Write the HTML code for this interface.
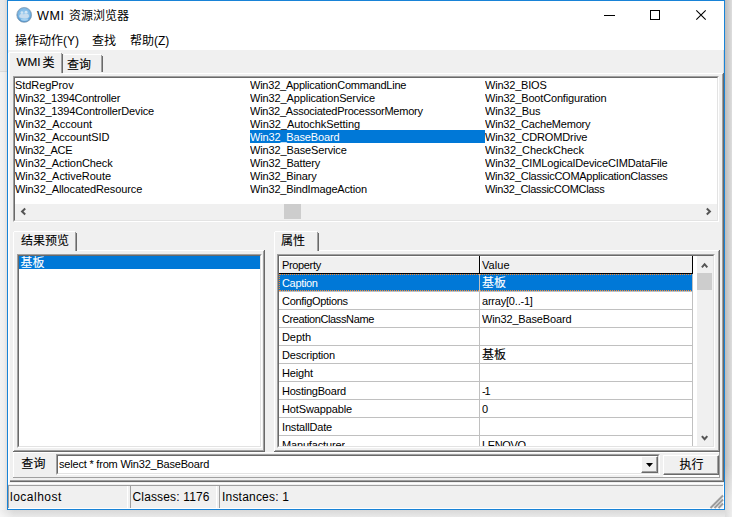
<!DOCTYPE html>
<html><head><meta charset="utf-8"><title>WMI 资源浏览器</title>
<style>
html,body{margin:0;padding:0}
body{width:732px;height:517px;overflow:hidden;position:relative;background:#e9e9e9;font-family:"Liberation Sans","Noto Sans CJK SC",sans-serif;color:#000}
div,span{position:absolute;box-sizing:border-box;white-space:nowrap}
svg{position:absolute;overflow:visible}
.shL{left:0;top:0;width:7px;height:517px;background:linear-gradient(180deg,rgba(0,0,0,0.035) 0,rgba(0,0,0,0.035) 71px,rgba(0,0,0,0.09) 71px,rgba(0,0,0,0.09) 72px,rgba(0,0,0,0) 72px),linear-gradient(90deg,#f3f3f3 0,#eeeeee 60%,#e2dfdc 100%)}
.shR{left:725px;top:0;width:7px;height:517px;background:linear-gradient(180deg,rgba(255,255,255,0) 0,rgba(255,255,255,0) 465px,rgba(255,255,255,0.45) 500px,rgba(255,255,255,0.5) 517px),linear-gradient(90deg,#bcbcbc,#dddddd)}
.shB{left:0;top:510px;width:725px;height:7px;background:linear-gradient(90deg,rgba(255,255,255,0.6) 0,rgba(255,255,255,0) 14px),linear-gradient(180deg,#d8d8d8,#e9e9e9)}
.win{left:7px;top:0;width:718px;height:510px;border:1px solid #1883d7;background:#fff}
.client{left:8px;top:50px;width:716px;height:459px;background:#f0f0f0}
.title{left:37px;top:7px;font-size:12px;line-height:18px}
.menu{top:33px;font-size:12px;line-height:17px}
.li{font-size:11.5px;line-height:12px;height:12px;transform:scaleX(0.956);transform-origin:0 0}
.sel{background:#0078d7;color:#fff}
.hl{background:#fff}.sh{background:#a0a0a0}.dk{background:#696969}.lt{background:#e3e3e3}.bk{background:#000}
.sunk{border:1px solid;border-color:#a0a0a0 #fff #fff #a0a0a0;background:#fff}
.sunk>i{position:absolute;left:0;top:0;right:0;bottom:0;border:1px solid;border-color:#696969 #e3e3e3 #e3e3e3 #696969}
.tab{font-size:12px;line-height:16px;-webkit-text-stroke:0.1px}
.st{font-size:12px;line-height:16px;top:489px}
.gl{background:#c0c0c0}
.pr{font-size:11.5px;line-height:12px;transform:scaleX(0.956);transform-origin:0 0}
</style></head><body>
<div class="shL"></div><div class="shR"></div><div class="shB"></div>
<div class="win"></div>
<!-- title bar -->
<svg style="left:16px;top:6px" width="17" height="17" viewBox="0 0 17 17">
<defs><radialGradient id="g1" cx="0.5" cy="0.45" r="0.55"><stop offset="0" stop-color="#a4d0f0"/><stop offset="0.7" stop-color="#7db8e5"/><stop offset="0.9" stop-color="#4f96d2"/><stop offset="1" stop-color="#4288c6"/></radialGradient></defs>
<circle cx="8.2" cy="8.9" r="7.4" fill="url(#g1)" stroke="#8a9fb3" stroke-width="0.8"/>
<circle cx="5.9" cy="6.6" r="1.3" fill="#cfe4f3"/><circle cx="10.1" cy="6.2" r="1.4" fill="#d3e6f4"/>
<path d="M3.2 10.6C3.2 8.4 4.6 7.9 6 7.9C7 7.9 7.6 8.2 8 8.6C8.5 7.9 9.2 7.6 10.2 7.6C12 7.6 13 8.6 13 10.4C13 11.6 11 12.3 8 12.3C5 12.3 3.2 11.8 3.2 10.6Z" fill="#c6dcee"/>
<ellipse cx="8.6" cy="13.6" rx="3.8" ry="1.3" fill="#b5dbf5" opacity="0.7"/>
</svg>
<div class="title"><span style="position:static;font-size:12.6px;letter-spacing:0.6px;margin-right:0.9px">WMI</span> 资源浏览器</div>
<svg style="left:604px;top:15px" width="11" height="1"><rect width="11" height="1" fill="#000"/></svg>
<svg style="left:650px;top:10px" width="10" height="10"><rect x="0.5" y="0.5" width="9" height="9" fill="none" stroke="#000" stroke-width="1"/></svg>
<svg style="left:696px;top:10px" width="10" height="10"><path d="M0.3 0.3L9.7 9.7M9.7 0.3L0.3 9.7" stroke="#000" stroke-width="1.1" fill="none"/></svg>
<!-- menu -->
<div class="menu" style="left:15px">操作动作(Y)</div>
<div class="menu" style="left:92px">查找</div>
<div class="menu" style="left:130px">帮助(Z)</div>
<div class="client"></div>
<!-- main tab control -->
<div class="hl" style="left:8px;top:73px;width:714px;height:1px"></div>
<div class="sh" style="left:722px;top:74px;width:1px;height:407px"></div>
<div class="dk" style="left:723px;top:73px;width:1px;height:409px"></div>
<div class="sh" style="left:10px;top:480px;width:713px;height:1px"></div>
<div class="dk" style="left:9px;top:481px;width:715px;height:1px"></div>
<!-- active tab -->
<div style="left:8px;top:52px;width:55px;height:22px;background:#f0f0f0"></div>
<div class="hl" style="left:8px;top:53px;width:1px;height:430px"></div>
<div style="left:9px;top:53px;width:1px;height:429px;background:#f9f9f9"></div>
<div class="hl" style="left:9px;top:52px;width:52px;height:1px"></div>
<div class="sh" style="left:61px;top:53px;width:1px;height:20px"></div>
<div class="dk" style="left:62px;top:54px;width:1px;height:19px"></div>
<div class="tab" style="left:16.5px;top:54px;font-size:11.7px;word-spacing:-1.2px">WMI <span style="position:relative;top:1px;font-size:12px">类</span></div>
<!-- inactive tab -->
<div class="hl" style="left:64px;top:54px;width:37px;height:1px"></div>
<div class="sh" style="left:101px;top:55px;width:1px;height:17px"></div>
<div class="dk" style="left:102px;top:56px;width:1px;height:16px"></div>
<div class="tab" style="left:67px;top:57px">查询</div>
<div style="left:723px;top:50px;width:1px;height:23px;background:#d9d9d9"></div>
<!-- class listbox -->
<div class="sunk" style="left:13px;top:76px;width:706px;height:146px"><i></i></div>

<div class="li" style="left:15px;top:79px;letter-spacing:-0.072px">StdRegProv</div>
<div class="li" style="left:15px;top:92px;letter-spacing:-0.225px">Win32_1394Controller</div>
<div class="li" style="left:15px;top:105px;letter-spacing:-0.161px">Win32_1394ControllerDevice</div>
<div class="li" style="left:15px;top:118px;letter-spacing:0.008px">Win32_Account</div>
<div class="li" style="left:15px;top:131px;letter-spacing:-0.067px">Win32_AccountSID</div>
<div class="li" style="left:15px;top:144px;letter-spacing:-0.312px">Win32_ACE</div>
<div class="li" style="left:15px;top:157px;letter-spacing:-0.08px">Win32_ActionCheck</div>
<div class="li" style="left:15px;top:170px;letter-spacing:-0.034px">Win32_ActiveRoute</div>
<div class="li" style="left:15px;top:183px;letter-spacing:-0.108px">Win32_AllocatedResource</div>
<div class="li" style="left:250px;top:79px;letter-spacing:-0.238px">Win32_ApplicationCommandLine</div>
<div class="li" style="left:250px;top:92px;letter-spacing:-0.119px">Win32_ApplicationService</div>
<div class="li" style="left:250px;top:105px;letter-spacing:-0.255px">Win32_AssociatedProcessorMemory</div>
<div class="li" style="left:250px;top:118px;letter-spacing:-0.065px">Win32_AutochkSetting</div>
<div class="sel" style="left:250px;top:130px;width:235px;height:13px"></div>
<div class="li" style="left:250px;top:131px;letter-spacing:-0.159px;color:#fff">Win32_BaseBoard</div>
<div class="li" style="left:250px;top:144px;letter-spacing:-0.142px">Win32_BaseService</div>
<div class="li" style="left:250px;top:157px;letter-spacing:-0.154px">Win32_Battery</div>
<div class="li" style="left:250px;top:170px;letter-spacing:-0.169px">Win32_Binary</div>
<div class="li" style="left:250px;top:183px;letter-spacing:-0.174px">Win32_BindImageAction</div>
<div class="li" style="left:485px;top:79px;letter-spacing:-0.205px">Win32_BIOS</div>
<div class="li" style="left:485px;top:92px;letter-spacing:-0.177px">Win32_BootConfiguration</div>
<div class="li" style="left:485px;top:105px;letter-spacing:-0.107px">Win32_Bus</div>
<div class="li" style="left:485px;top:118px;letter-spacing:-0.213px">Win32_CacheMemory</div>
<div class="li" style="left:485px;top:131px;letter-spacing:-0.142px">Win32_CDROMDrive</div>
<div class="li" style="left:485px;top:144px;letter-spacing:-0.039px">Win32_CheckCheck</div>
<div class="li" style="left:485px;top:157px;letter-spacing:-0.139px">Win32_CIMLogicalDeviceCIMDataFile</div>
<div class="li" style="left:485px;top:170px;letter-spacing:-0.266px">Win32_ClassicCOMApplicationClasses</div>
<div class="li" style="left:485px;top:183px;letter-spacing:-0.316px">Win32_ClassicCOMClass</div>
<!-- hscroll -->
<div style="left:15px;top:204px;width:702px;height:16px;background:#f0f0f0"></div>
<div style="left:284px;top:204px;width:17px;height:15px;background:#cdcdcd"></div>
<svg style="left:20px;top:207px" width="8" height="9"><path d="M5.2 1.6L2.1 4.5L5.2 7.4" stroke="#555" stroke-width="2" fill="none"/></svg>
<svg style="left:705px;top:207px" width="8" height="9"><path d="M1.8 1.6L4.9 4.5L1.8 7.4" stroke="#555" stroke-width="2" fill="none"/></svg>
<!-- left panel: tab + page -->
<div class="hl" style="left:13px;top:250px;width:250px;height:1px"></div>
<div class="hl" style="left:13px;top:250px;width:1px;height:201px"></div>
<div class="sh" style="left:263px;top:251px;width:1px;height:200px"></div>
<div class="dk" style="left:264px;top:250px;width:1px;height:202px"></div>
<div class="sh" style="left:14px;top:450px;width:250px;height:1px"></div>
<div class="dk" style="left:13px;top:451px;width:252px;height:1px"></div>
<div style="left:13px;top:231px;width:64px;height:21px;background:#f0f0f0"></div>
<div class="hl" style="left:13px;top:232px;width:1px;height:20px"></div>
<div class="hl" style="left:14px;top:231px;width:61px;height:1px"></div>
<div class="sh" style="left:75px;top:232px;width:1px;height:19px"></div>
<div class="dk" style="left:76px;top:233px;width:1px;height:18px"></div>
<div class="tab" style="left:21px;top:233px">结果预览</div>
<div class="sunk" style="left:17px;top:254px;width:245px;height:194px"><i></i></div>
<div class="sel" style="left:19px;top:256px;width:241px;height:13px"></div>
<div class="tab" style="left:20.5px;top:255px;color:#fff;font-weight:400">基板</div>
<!-- right panel -->
<div class="hl" style="left:274px;top:250px;width:444px;height:1px"></div>
<div class="hl" style="left:274px;top:250px;width:1px;height:201px"></div>
<div class="sh" style="left:718px;top:251px;width:1px;height:200px"></div>
<div class="dk" style="left:719px;top:250px;width:1px;height:202px"></div>
<div class="sh" style="left:275px;top:450px;width:444px;height:1px"></div>
<div class="dk" style="left:274px;top:451px;width:446px;height:1px"></div>
<div style="left:274px;top:231px;width:45px;height:21px;background:#f0f0f0"></div>
<div class="hl" style="left:274px;top:232px;width:1px;height:20px"></div>
<div class="hl" style="left:275px;top:231px;width:42px;height:1px"></div>
<div class="sh" style="left:317px;top:232px;width:1px;height:19px"></div>
<div class="dk" style="left:318px;top:233px;width:1px;height:18px"></div>
<div class="tab" style="left:281px;top:233px">属性</div>
<div class="sunk" style="left:277px;top:254px;width:438px;height:194px"><i></i></div>
<!-- grid header -->
<div style="left:279px;top:256px;width:414px;height:18px;background:#f0f0f0"></div>
<div class="hl" style="left:279px;top:256px;width:200px;height:1px"></div>
<div class="hl" style="left:279px;top:256px;width:1px;height:17px"></div>
<div class="hl" style="left:480px;top:256px;width:212px;height:1px"></div>
<div class="hl" style="left:480px;top:256px;width:1px;height:17px"></div>
<div class="bk" style="left:279px;top:273px;width:414px;height:1px"></div>
<div class="bk" style="left:479px;top:256px;width:1px;height:18px"></div>
<div class="bk" style="left:692px;top:256px;width:1px;height:18px"></div>

<div class="pr" style="left:281.5px;top:259px;letter-spacing:-0.36px">Property</div>
<div class="pr" style="left:482px;top:259px;letter-spacing:0.062px">Value</div>
<div class="sel" style="left:279px;top:274px;width:414px;height:17px;outline:1px dotted #ff8728;outline-offset:-1px"></div>
<div class="gl" style="left:279px;top:291px;width:414px;height:1px"></div>
<div class="gl" style="left:479px;top:274px;width:1px;height:17px"></div>
<div class="pr" style="left:281.5px;top:277px;letter-spacing:-0.343px;color:#fff">Caption</div>
<div class="tab" style="left:482px;top:275px;color:#fff;font-weight:400">基板</div>
<div class="gl" style="left:279px;top:309px;width:414px;height:1px"></div>
<div class="gl" style="left:479px;top:292px;width:1px;height:17px"></div>
<div class="pr" style="left:281.5px;top:295px;letter-spacing:-0.311px">ConfigOptions</div>
<div class="pr" style="left:482px;top:295px;letter-spacing:-0.215px">array[0..-1]</div>
<div class="gl" style="left:279px;top:327px;width:414px;height:1px"></div>
<div class="gl" style="left:479px;top:310px;width:1px;height:17px"></div>
<div class="pr" style="left:281.5px;top:313px;letter-spacing:-0.399px">CreationClassName</div>
<div class="pr" style="left:482px;top:313px;letter-spacing:-0.159px">Win32_BaseBoard</div>
<div class="gl" style="left:279px;top:345px;width:414px;height:1px"></div>
<div class="gl" style="left:479px;top:328px;width:1px;height:17px"></div>
<div class="pr" style="left:281.5px;top:331px;letter-spacing:-0.071px">Depth</div>
<div class="gl" style="left:279px;top:363px;width:414px;height:1px"></div>
<div class="gl" style="left:479px;top:346px;width:1px;height:17px"></div>
<div class="pr" style="left:281.5px;top:349px;letter-spacing:-0.2px">Description</div>
<div class="tab" style="left:482px;top:347px">基板</div>
<div class="gl" style="left:279px;top:381px;width:414px;height:1px"></div>
<div class="gl" style="left:479px;top:364px;width:1px;height:17px"></div>
<div class="pr" style="left:281.5px;top:367px;letter-spacing:-0.137px">Height</div>
<div class="gl" style="left:279px;top:399px;width:414px;height:1px"></div>
<div class="gl" style="left:479px;top:382px;width:1px;height:17px"></div>
<div class="pr" style="left:281.5px;top:385px;letter-spacing:-0.228px">HostingBoard</div>
<div class="pr" style="left:482px;top:385px;letter-spacing:-1.09px">-1</div>
<div class="gl" style="left:279px;top:417px;width:414px;height:1px"></div>
<div class="gl" style="left:479px;top:400px;width:1px;height:17px"></div>
<div class="pr" style="left:281.5px;top:403px;letter-spacing:-0.133px">HotSwappable</div>
<div class="pr" style="left:482px;top:403px;letter-spacing:0.079px">0</div>
<div class="gl" style="left:279px;top:435px;width:414px;height:1px"></div>
<div class="gl" style="left:479px;top:418px;width:1px;height:17px"></div>
<div class="pr" style="left:281.5px;top:421px;letter-spacing:-0.186px">InstallDate</div>
<div class="gl" style="left:479px;top:436px;width:1px;height:10px"></div>
<div class="pr" style="left:281.5px;top:439px;letter-spacing:-0.164px;height:7px;overflow:hidden">Manufacturer</div>
<div class="pr" style="left:482px;top:439px;letter-spacing:-0.354px;height:7px;overflow:hidden">LENOVO</div>
<div class="gl" style="left:692px;top:274px;width:1px;height:172px"></div>
<!-- vscroll -->
<div style="left:697px;top:256px;width:16px;height:190px;background:#f0f0f0"></div>
<div style="left:697px;top:273px;width:15px;height:17px;background:#cdcdcd"></div>
<svg style="left:700px;top:261px" width="9" height="8"><path d="M1.9 6.3L4.6 3.2L7.3 6.3" stroke="#555" stroke-width="2" fill="none"/></svg>
<svg style="left:700px;top:434px" width="9" height="8"><path d="M1.9 2.1L4.6 5.2L7.3 2.1" stroke="#555" stroke-width="2" fill="none"/></svg>
<!-- query row -->
<div class="hl" style="left:13px;top:452px;width:706px;height:1px"></div>
<div class="hl" style="left:13px;top:452px;width:1px;height:25px"></div>
<div class="sh" style="left:13px;top:477px;width:707px;height:1px"></div>
<div class="sh" style="left:719px;top:452px;width:1px;height:26px"></div>
<div class="tab" style="left:21.3px;top:456px;letter-spacing:0.2px">查询</div>
<div class="sunk" style="left:56px;top:454px;width:604px;height:21px"><i></i></div>

<div class="pr" style="left:59px;top:458px;letter-spacing:-0.207px">select * from Win32_BaseBoard</div>
<div style="left:641px;top:456px;width:17px;height:17px;background:#f0f0f0;border:1px solid;border-color:#fff #696969 #696969 #fff"></div>
<div class="sh" style="left:642px;top:471px;width:15px;height:1px"></div>
<div class="sh" style="left:656px;top:457px;width:1px;height:15px"></div>
<svg style="left:646px;top:463px" width="7" height="4"><path d="M0 0H7L3.5 4Z" fill="#000"/></svg>
<div style="left:663px;top:455px;width:56px;height:20px;background:#f0f0f0;border:1px solid;border-color:#fff #696969 #696969 #fff"></div>
<div class="sh" style="left:664px;top:473px;width:54px;height:1px"></div>
<div class="sh" style="left:717px;top:456px;width:1px;height:18px"></div>
<div class="hl" style="left:663px;top:475px;width:56px;height:2px"></div>
<div class="tab" style="left:679.5px;top:457px">执行</div>
<!-- status bar -->
<div class="hl" style="left:8px;top:483px;width:716px;height:1px"></div>
<div class="sh" style="left:8px;top:485px;width:715px;height:1px"></div>
<div class="hl" style="left:723px;top:485px;width:1px;height:23px"></div>
<div class="sh" style="left:8px;top:486px;width:1px;height:22px"></div>
<div class="hl" style="left:127px;top:486px;width:1px;height:22px"></div>
<div class="sh" style="left:130px;top:486px;width:1px;height:22px"></div>
<div class="hl" style="left:216px;top:486px;width:1px;height:22px"></div>
<div class="sh" style="left:219px;top:486px;width:1px;height:22px"></div>
<div class="hl" style="left:8px;top:508px;width:716px;height:1px"></div>
<div class="st" style="left:10px;letter-spacing:0.5px">localhost</div>
<div class="st" style="left:132.5px;letter-spacing:0.15px">Classes: 1176</div>
<div class="st" style="left:222px;letter-spacing:0.2px">Instances: 1</div>
<svg style="left:710px;top:495px" width="13" height="13"><path d="M13 0.5L0.5 13M13 4.5L4.5 13M13 8.5L8.5 13" stroke="#9c9c9c" stroke-width="2" fill="none"/></svg>
</body></html>
